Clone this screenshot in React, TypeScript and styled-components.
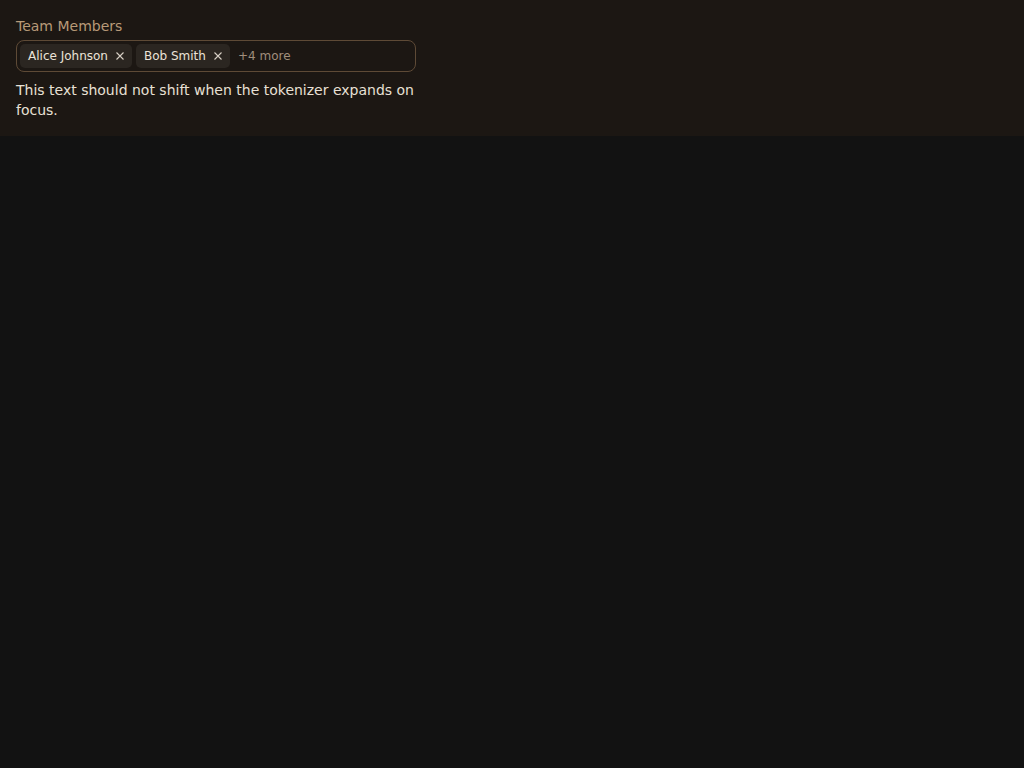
import React from "react";
import styled, { createGlobalStyle } from "styled-components";

const Global = createGlobalStyle`
  html, body { margin: 0; padding: 0; background: #121212; }
  body { font-family: "DejaVu Sans", sans-serif; }
  * { box-sizing: border-box; }
`;

const Panel = styled.section`
  background: #1c1713;
  padding: 16px;
  display: flex;
  flex-direction: column;
`;

const Label = styled.label`
  font-size: 14px;
  line-height: 20px;
  color: #b89a78;
  margin-bottom: 4px;
`;

const Field = styled.div`
  width: 400px;
  height: 32px;
  border: 1px solid #5e4a36;
  border-radius: 8px;
  padding: 3px;
  display: flex;
  align-items: center;
  gap: 4px;
`;

const Chip = styled.span`
  display: inline-flex;
  align-items: center;
  height: 24px;
  padding: 0 8px;
  background: #2b2621;
  border-radius: 5px;
  font-size: 12px;
  color: #ebe3d8;
  gap: 8px;
`;

const Remove = styled.button`
  border: none;
  background: none;
  padding: 0;
  width: 8px;
  height: 8px;
  display: inline-flex;
  align-items: center;
  justify-content: center;
  color: #d8d0c6;
  cursor: pointer;
`;

const More = styled.span`
  font-size: 12px;
  color: #a08e7c;
  margin-left: 4px;
`;

const Note = styled.p`
  margin: 8px 0 0;
  width: 400px;
  font-size: 14px;
  line-height: 20px;
  color: #e8e0d5;
`;

const X = () => (
  <svg width="8" height="8" viewBox="0 0 8 8" fill="none" stroke="currentColor" strokeWidth="1.1">
    <path d="M0.5 0.5 L7.5 7.5 M7.5 0.5 L0.5 7.5" />
  </svg>
);

const members = ["Alice Johnson", "Bob Smith"];

export default function App() {
  return (
    <>
      <Global />
      <Panel>
        <Label>Team Members</Label>
        <Field>
          {members.map((m) => (
            <Chip key={m}>
              {m}
              <Remove aria-label={`Remove ${m}`}>
                <X />
              </Remove>
            </Chip>
          ))}
          <More>+4 more</More>
        </Field>
        <Note>This text should not shift when the tokenizer expands on focus.</Note>
      </Panel>
    </>
  );
}
